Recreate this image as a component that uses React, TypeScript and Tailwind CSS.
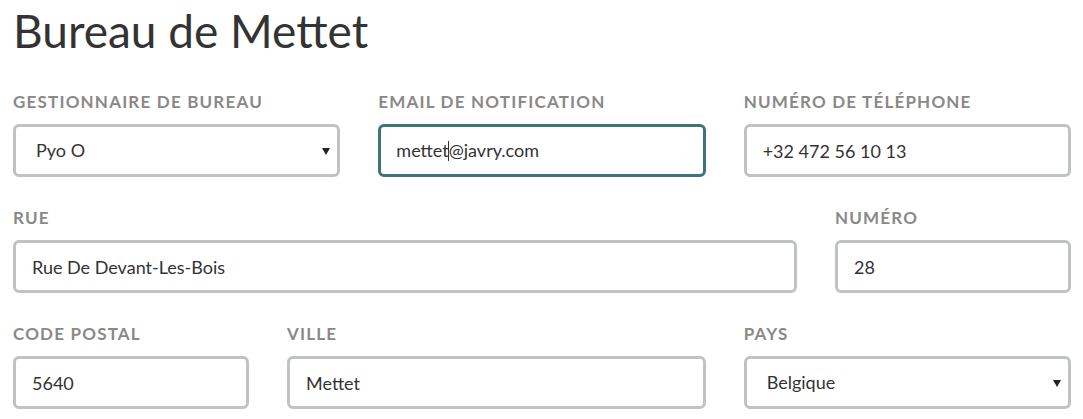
import React from 'react';

const labelCls =
  "block h-5 mb-3 text-[17px] leading-5 font-bold uppercase tracking-[0.07em] text-[#8b8888] font-['Lato',sans-serif]";
const boxCls =
  "w-full h-[53px] rounded-[6px] border-[3px] border-[#bfc3c5] bg-white px-[16px] text-[18px] text-[#333] font-['Lato',sans-serif] outline-none";

function Field({ label, value, span }: { label: string; value: string; span: string }) {
  return (
    <div className={span}>
      <label className={labelCls}>{label}</label>
      <input readOnly value={value} className={boxCls} />
    </div>
  );
}

function SelectField({ label, value, span }: { label: string; value: string; span: string }) {
  return (
    <div className={span}>
      <label className={labelCls}>{label}</label>
      <div className="relative">
        <select value={value} onChange={() => {}} className={`${boxCls} appearance-none pl-[20px]`}>
          <option>{value}</option>
        </select>
        <span className="pointer-events-none absolute right-[10px] top-[24px] h-0 w-0 border-x-[4px] border-t-[7px] border-x-transparent border-t-[#222]" />
      </div>
    </div>
  );
}

export default function App() {
  return (
    <div className="min-h-screen bg-white pl-[13px] pr-[12px]">
      <h1 className="pt-[2px] mb-[32px] text-[46px] leading-[58px] text-[#333] font-['Lato',sans-serif] font-normal">
        Bureau de Mettet
      </h1>
      <div className="grid grid-cols-12 gap-x-[38px] gap-y-[31px]">
        <SelectField span="col-span-4" label="Gestionnaire de bureau" value="Pyo O" />
        <div className="col-span-4">
          <label className={labelCls}>Email de notification</label>
          <div className="flex h-[53px] w-full items-center rounded-[6px] border-[3px] border-[#3e7378] bg-white px-[15px] text-[18px] text-[#333] font-['Lato',sans-serif]">
            <span>mettet</span>
            <span className="mx-[-0.5px] inline-block h-[20px] w-px bg-[#333]" />
            <span>@javry.com</span>
          </div>
        </div>
        <Field span="col-span-4" label="Numéro de téléphone" value="+32 472 56 10 13" />
        <Field span="col-span-9" label="Rue" value="Rue De Devant-Les-Bois" />
        <Field span="col-span-3" label="Numéro" value="28" />
        <Field span="col-span-3" label="Code postal" value="5640" />
        <Field span="col-span-5" label="Ville" value="Mettet" />
        <SelectField span="col-span-4" label="Pays" value="Belgique" />
      </div>
    </div>
  );
}
